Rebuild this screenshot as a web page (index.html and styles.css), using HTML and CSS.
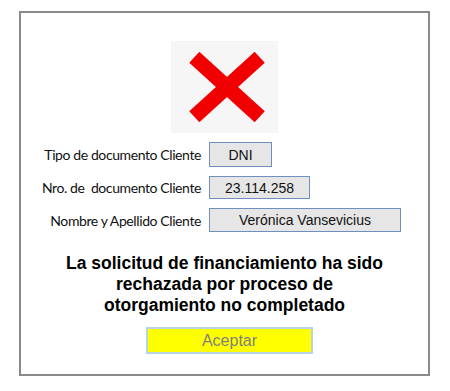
FILE: index.html
```html
<!DOCTYPE html>
<html lang="es">
<head>
    <meta charset="UTF-8">
    <meta name="viewport" content="width=device-width, initial-scale=1.0">
    <title>Solicitud rechazada</title>
    <link rel="stylesheet" href="styles.css">
</head>
<body>
    <div class="frame">
        <div class="icon-box">
            <svg width="76" height="70" viewBox="0 0 76 70">
                <line x1="5.3" y1="5.3" x2="70.7" y2="64.7" stroke="#f00000" stroke-width="15"/>
                <line x1="70.7" y1="5.3" x2="5.3" y2="64.7" stroke="#f00000" stroke-width="15"/>
            </svg>
        </div>

        <div class="fields">
            <div class="field">
                <span class="label">Tipo de documento Cliente</span>
                <span class="value value-short">DNI</span>
            </div>
            <div class="field">
                <span class="label">Nro. de&nbsp; documento Cliente</span>
                <span class="value value-mid">23.114.258</span>
            </div>
            <div class="field">
                <span class="label">Nombre y Apellido Cliente</span>
                <span class="value value-long">Verónica Vansevicius</span>
            </div>
        </div>

        <p class="message">La solicitud de financiamiento ha sido<br>rechazada por proceso de<br>otorgamiento no completado</p>

        <button class="accept">Aceptar</button>
    </div>
</body>
</html>
```

FILE: styles.css
```css
* {
    box-sizing: border-box;
}

body {
    margin: 0;
    padding: 0;
    background-color: #ffffff;
    font-family: "Liberation Sans", Arial, sans-serif;
    color: #000;
}

.frame {
    width: 411px;
    height: 365px;
    margin: 11px 0 0 19px;
    border: 2px solid #8a8a8a;
    padding-top: 28px;
    display: flex;
    flex-direction: column;
    align-items: center;
}

.icon-box {
    width: 107px;
    height: 92px;
    background-color: #f6f6f6;
    display: flex;
    align-items: center;
    justify-content: center;
}

.icon-box svg {
    margin-left: 5px;
}

.fields {
    align-self: stretch;
    display: flex;
    flex-direction: column;
    gap: 9px;
    margin-top: 9px;
}

.field {
    display: flex;
    align-items: center;
    gap: 8px;
}

.label {
    width: 180px;
    text-align: right;
    font-family: Lato, "Open Sans", sans-serif;
    font-size: 14px;
    letter-spacing: -0.4px;
    color: #111;
}

.value {
    display: flex;
    align-items: center;
    justify-content: center;
    background-color: #e6e6e6;
    border: 1px solid #6f8fbf;
    font-size: 14px;
    color: #111;
}

.value-short {
    width: 63px;
    height: 25px;
}

.value-mid {
    width: 101px;
    height: 23px;
}

.value-long {
    width: 192px;
    height: 24px;
}

.message {
    margin: 21px 0 0;
    font-size: 17.5px;
    font-weight: bold;
    line-height: 21px;
    text-align: center;
}

.accept {
    margin: 11px 0 0 10px;
    width: 167px;
    height: 27px;
    background-color: #ffff00;
    border: 2px solid #b9d3e6;
    font-family: "Liberation Sans", Arial, sans-serif;
    font-size: 16px;
    color: #7f7f7f;
    padding: 0;
}
```
